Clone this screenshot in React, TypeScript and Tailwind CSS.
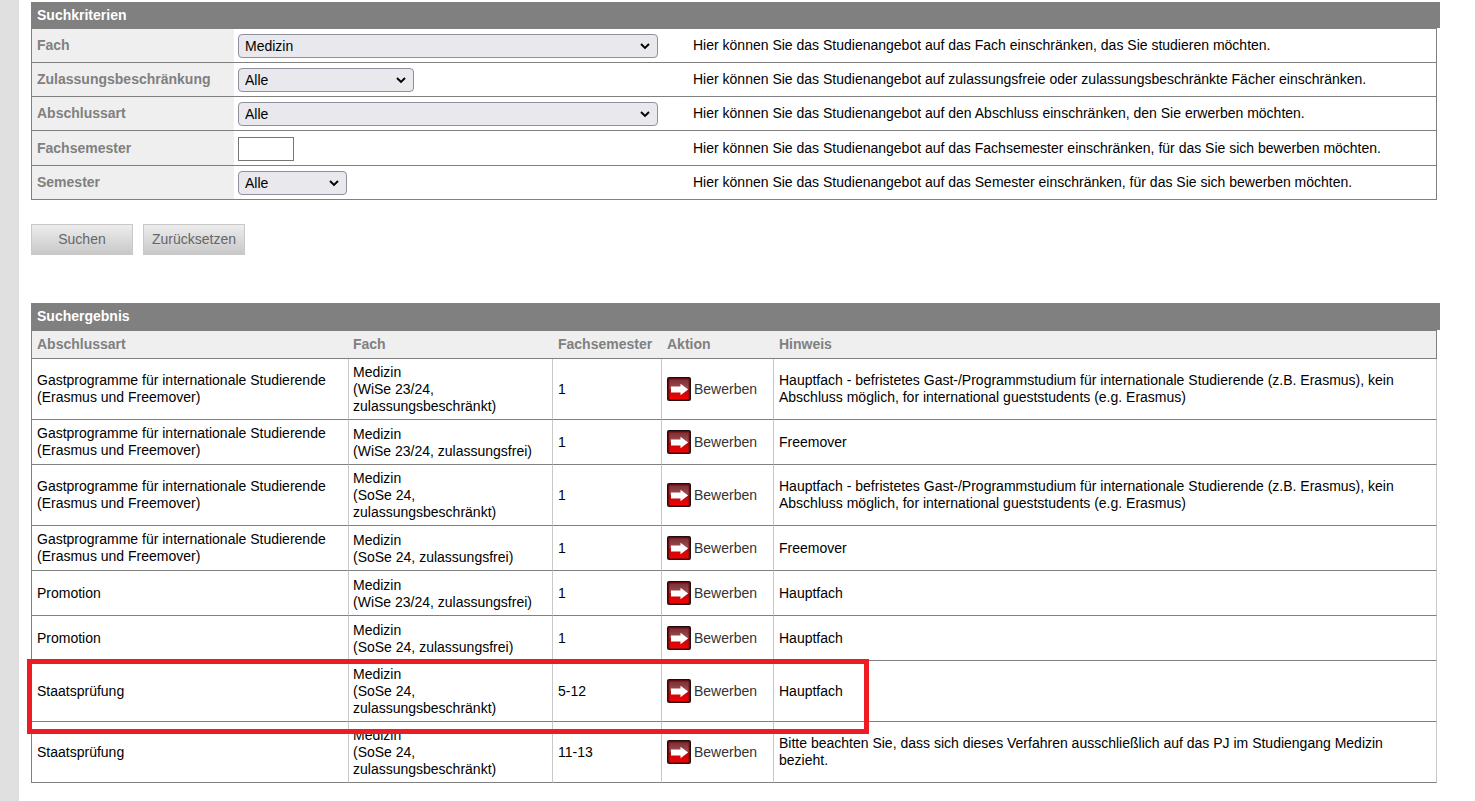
import React from 'react';

interface Criterion {
  id: string;
  label: string;
  hint: string;
  options?: string[];
  width: string;
}

interface Result {
  degree: string[];
  term: string[];
  semester: string;
  note: string;
  marked?: boolean;
}

const criteria: Criterion[] = [
  {
    id: 'fach',
    label: 'Fach',
    hint: 'Hier können Sie das Studienangebot auf das Fach einschränken, das Sie studieren möchten.',
    options: ['Medizin'],
    width: 'w-[420px]',
  },
  {
    id: 'zulassung',
    label: 'Zulassungsbeschränkung',
    hint: 'Hier können Sie das Studienangebot auf zulassungsfreie oder zulassungsbeschränkte Fächer einschränken.',
    options: ['Alle'],
    width: 'w-44',
  },
  {
    id: 'abschluss',
    label: 'Abschlussart',
    hint: 'Hier können Sie das Studienangebot auf den Abschluss einschränken, den Sie erwerben möchten.',
    options: ['Alle'],
    width: 'w-[420px]',
  },
  {
    id: 'fachsemester',
    label: 'Fachsemester',
    hint: 'Hier können Sie das Studienangebot auf das Fachsemester einschränken, für das Sie sich bewerben möchten.',
    width: 'w-14',
  },
  {
    id: 'semester',
    label: 'Semester',
    hint: 'Hier können Sie das Studienangebot auf das Semester einschränken, für das Sie sich bewerben möchten.',
    options: ['Alle'],
    width: 'w-[109px]',
  },
];

const guest = ['Gastprogramme für internationale Studierende', '(Erasmus und Freemover)'];
const guestNote =
  'Hauptfach - befristetes Gast-/Programmstudium für internationale Studierende (z.B. Erasmus), kein Abschluss möglich, for international gueststudents (e.g. Erasmus)';

const results: Result[] = [
  { degree: guest, term: ['(WiSe 23/24,', 'zulassungsbeschränkt)'], semester: '1', note: guestNote },
  { degree: guest, term: ['(WiSe 23/24, zulassungsfrei)'], semester: '1', note: 'Freemover' },
  { degree: guest, term: ['(SoSe 24,', 'zulassungsbeschränkt)'], semester: '1', note: guestNote },
  { degree: guest, term: ['(SoSe 24, zulassungsfrei)'], semester: '1', note: 'Freemover' },
  { degree: ['Promotion'], term: ['(WiSe 23/24, zulassungsfrei)'], semester: '1', note: 'Hauptfach' },
  { degree: ['Promotion'], term: ['(SoSe 24, zulassungsfrei)'], semester: '1', note: 'Hauptfach' },
  { degree: ['Staatsprüfung'], term: ['(SoSe 24,', 'zulassungsbeschränkt)'], semester: '5-12', note: 'Hauptfach', marked: true },
  {
    degree: ['Staatsprüfung'],
    term: ['(SoSe 24,', 'zulassungsbeschränkt)'],
    semester: '11-13',
    note: 'Bitte beachten Sie, dass sich dieses Verfahren ausschließlich auf das PJ im Studiengang Medizin bezieht.',
  },
];

const ApplyIcon: React.FC = () => (
  <svg className="size-6 shrink-0" viewBox="0 0 24 24" aria-hidden="true">
    <defs>
      <linearGradient id="applyBorder" x1="0" y1="0" x2="0" y2="1">
        <stop offset="0" stopColor="#1c0c0d" />
        <stop offset="1" stopColor="#2e1213" />
      </linearGradient>
      <linearGradient id="applyFill" x1="0" y1="0" x2="0" y2="1">
        <stop offset="0" stopColor="#7a3034" />
        <stop offset="0.48" stopColor="#a04e52" />
        <stop offset="0.52" stopColor="#b80a10" />
        <stop offset="1" stopColor="#f80000" />
      </linearGradient>
    </defs>
    <rect width="24" height="24" rx="2" fill="url(#applyBorder)" />
    <rect x="1.2" y="1.2" width="21.6" height="21.6" rx="1.2" fill="#7c0c10" />
    <rect x="2.4" y="2.4" width="19.2" height="19.8" rx="1" fill="url(#applyFill)" />
    <path d="M4 9.4h9.5V6.8l7.6 5.7-7.6 5.7v-2.7H4z" fill="#fff" />
  </svg>
);

const Select: React.FC<{ item: Criterion }> = ({ item }) => (
  <div className={`relative ${item.width}`}>
    <select
      id={item.id}
      className="block h-6 w-full appearance-none rounded border border-[#8f8f9d] bg-[#e9e9ed] pl-1.5 pr-6 text-black"
    >
      {item.options?.map((o) => (
        <option key={o}>{o}</option>
      ))}
    </select>
    <svg className="pointer-events-none absolute right-2 top-2 h-2 w-2.5" viewBox="0 0 10 8" aria-hidden="true">
      <path d="M1 2l4 4 4-4" fill="none" stroke="#000" strokeWidth="1.9" />
    </svg>
  </div>
);

const line = 'border-b border-[#808080]';
const cell = 'border-r border-b border-r-[#c8c8c8] border-b-[#808080] py-1 pl-[5px] pr-1';
const head = 'border-b border-[#808080] pl-[5px] text-left';
const button = 'h-[31px] w-[102px] border border-[#c8c8c8] bg-linear-to-b from-[#ededed] to-[#c8c8c8] text-[#666666]';

const App: React.FC = () => {
  return (
    <div className="flex min-h-screen bg-white font-['Liberation_Sans',Arial,sans-serif] text-[14px] leading-[17px] text-black">
      <div className="w-[19px] shrink-0 bg-[#e0e0e0]"></div>
      <main className="grow pt-0.5 pl-3 pr-[35px]">
        <form onSubmit={(e) => e.preventDefault()}>
          <h2 className="flex h-[26px] items-center bg-[#808080] px-1.5 font-bold text-white">Suchkriterien</h2>
          <div className="pr-[3px]">
            <table className="w-full table-fixed border-separate border-spacing-0 border-x border-t border-[#808080]">
              <colgroup>
                <col className="w-[202px]" />
                <col className="w-[455px]" />
                <col />
              </colgroup>
              <tbody>
                {criteria.map((item) => (
                  <tr key={item.id} className={item.options ? 'h-[34px]' : 'h-[35px]'}>
                    <th className={`${line} bg-[#efefef] pl-[5px] text-left text-[#808080]`}>
                      <label htmlFor={item.id}>{item.label}</label>
                    </th>
                    <td className={`${line} pt-[5px] pb-1 pl-1`}>
                      {item.options ? (
                        <Select item={item} />
                      ) : (
                        <input id={item.id} type="text" className={`block h-6 border border-[#767676] bg-white px-1 ${item.width}`} />
                      )}
                    </td>
                    <td className={`${line} pl-1`}>{item.hint}</td>
                  </tr>
                ))}
              </tbody>
            </table>
          </div>
          <div className="mt-6 flex gap-2.5">
            <button type="submit" className={button}>Suchen</button>
            <button type="reset" className={button}>Zurücksetzen</button>
          </div>
        </form>

        <section className="mt-12">
          <h2 className="flex h-[27px] items-center bg-[#808080] px-1.5 font-bold text-white">Suchergebnis</h2>
          <div className="pr-[3px]">
            <table className="w-full table-fixed border-separate border-spacing-0 border-l border-t border-[#808080]">
              <colgroup>
                <col className="w-[317px]" />
                <col className="w-[204px]" />
                <col className="w-[109px]" />
                <col className="w-[112px]" />
                <col />
              </colgroup>
              <thead>
                <tr className="h-7 bg-[#efefef] text-[#808080]">
                  <th className={head}>Abschlussart</th>
                  <th className="border-b border-[#808080] pl-1 text-left">Fach</th>
                  <th className={head}>Fachsemester</th>
                  <th className={head}>Aktion</th>
                  <th className={`${head} border-r`}>Hinweis</th>
                </tr>
              </thead>
              <tbody>
                {results.map((row, i) => (
                  <tr key={i} className="h-[45px]">
                    <td className={`${cell} relative`}>
                      {row.degree.map((text) => (
                        <div key={text}>{text}</div>
                      ))}
                      {/* red marker frame around the row */}
                      {row.marked && (
                        <div className="pointer-events-none absolute -top-0.5 -left-[5px] z-10 h-[75px] w-[842px] border-5 border-[#ed1c24]"></div>
                      )}
                    </td>
                    <td className="border-r border-b border-r-[#c8c8c8] border-b-[#808080] px-1 pt-[5px] pb-1">
                      <div>Medizin</div>
                      {row.term.map((text) => (
                        <div key={text}>{text}</div>
                      ))}
                    </td>
                    <td className={cell}>{row.semester}</td>
                    <td className={cell}>
                      <a href="#" className="flex items-center gap-[3px] text-[#333333]">
                        <ApplyIcon />
                        Bewerben
                      </a>
                    </td>
                    <td className={cell}>
                      <div className="max-w-[640px]">{row.note}</div>
                    </td>
                  </tr>
                ))}
              </tbody>
            </table>
          </div>
        </section>
      </main>
    </div>
  );
};

export default App;
